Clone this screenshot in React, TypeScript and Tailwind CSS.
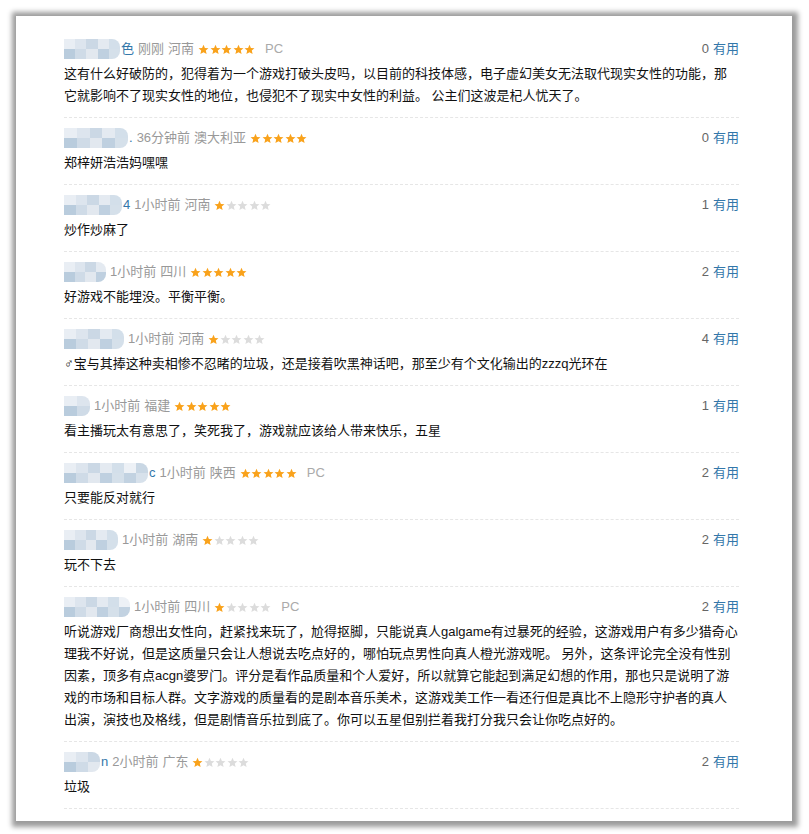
import React from 'react';

type Comment = {
  blur: number; // width of the blurred user name
  tail?: string; // visible end of the user name
  time: string;
  region: string;
  stars: number;
  pc?: boolean;
  useful: number;
  text: string;
};

const comments: Comment[] = [
  {
    blur: 56,
    tail: '色',
    time: '刚刚',
    region: '河南',
    stars: 5,
    pc: true,
    useful: 0,
    text: '这有什么好破防的，犯得着为一个游戏打破头皮吗，以目前的科技体感，电子虚幻美女无法取代现实女性的功能，那它就影响不了现实女性的地位，也侵犯不了现实中女性的利益。 公主们这波是杞人忧天了。',
  },
  { blur: 64, tail: '.', time: '36分钟前', region: '澳大利亚', stars: 5, useful: 0, text: '郑梓妍浩浩妈嘿嘿' },
  { blur: 58, tail: '4', time: '1小时前', region: '河南', stars: 1, useful: 1, text: '炒作炒麻了' },
  { blur: 42, time: '1小时前', region: '四川', stars: 5, useful: 2, text: '好游戏不能埋没。平衡平衡。' },
  {
    blur: 60,
    time: '1小时前',
    region: '河南',
    stars: 1,
    useful: 4,
    text: '♂宝与其捧这种卖相惨不忍睹的垃圾，还是接着吹黑神话吧，那至少有个文化输出的zzzq光环在',
  },
  { blur: 26, time: '1小时前', region: '福建', stars: 5, useful: 1, text: '看主播玩太有意思了，笑死我了，游戏就应该给人带来快乐，五星' },
  { blur: 84, tail: 'c', time: '1小时前', region: '陕西', stars: 5, pc: true, useful: 2, text: '只要能反对就行' },
  { blur: 54, time: '1小时前', region: '湖南', stars: 1, useful: 2, text: '玩不下去' },
  {
    blur: 66,
    time: '1小时前',
    region: '四川',
    stars: 1,
    pc: true,
    useful: 2,
    text: '听说游戏厂商想出女性向，赶紧找来玩了，尬得抠脚，只能说真人galgame有过暴死的经验，这游戏用户有多少猎奇心理我不好说，但是这质量只会让人想说去吃点好的，哪怕玩点男性向真人橙光游戏呢。 另外，这条评论完全没有性别因素，顶多有点acgn婆罗门。评分是看作品质量和个人爱好，所以就算它能起到满足幻想的作用，那也只是说明了游戏的市场和目标人群。文字游戏的质量看的是剧本音乐美术，这游戏美工作一看还行但是真比不上隐形守护者的真人出演，演技也及格线，但是剧情音乐拉到底了。你可以五星但别拦着我打分我只会让你吃点好的。',
  },
  { blur: 36, tail: 'n', time: '2小时前', region: '广东', stars: 1, useful: 2, text: '垃圾' },
];

const Star = ({ on }: { on: boolean }) => (
  <svg width="11" height="11" viewBox="0 0 24 24" className="shrink-0">
    <path
      d="M12 1.5l3.1 7.1 7.7.7-5.8 5.1 1.8 7.6L12 18l-6.8 4 1.8-7.6L1.2 9.3l7.7-.7z"
      fill={on ? '#f9a21b' : '#dcdcdc'}
    />
  </svg>
);

// mosaic used to hide the user name
const Blur = ({ width }: { width: number }) => {
  const top = ['#e9eef4', '#dde5ee', '#cbd8e5', '#e4eaf1', '#d3dfea', '#edf1f6', '#c9d7e4'];
  const bottom = ['#c2d2e1', '#d7e1eb', '#b9ccdd', '#cfdbe7', '#e2e8ef', '#bfd0e0', '#d5e0ea'];
  const n = Math.max(2, Math.round(width / 12));
  return (
    <div className="flex flex-col h-[20px] rounded-r-[8px] overflow-hidden blur-[0.6px]" style={{ width }}>
      <div className="flex flex-1">
        {Array.from({ length: n }).map((_, i) => (
          <div key={i} className="flex-1" style={{ background: top[i % top.length] }} />
        ))}
      </div>
      <div className="flex flex-1">
        {Array.from({ length: n }).map((_, i) => (
          <div key={i} className="flex-1" style={{ background: bottom[(i + 2) % bottom.length] }} />
        ))}
      </div>
    </div>
  );
};

const CommentRow = ({ c }: { c: Comment }) => (
  <div className="pt-[10px] pb-[10px] border-b border-dashed border-[#e6e6e6]">
    <div className="flex items-center justify-between h-[20px] text-[13px]">
      <div className="flex items-center text-[#999]">
        <Blur width={c.blur} />
        {c.tail && <span className="text-[#37a] ml-[1px]">{c.tail}</span>}
        <span className="ml-[4px]">{c.time}</span>
        <span className="ml-[4px]">{c.region}</span>
        <span className="flex ml-[4px] gap-[0.5px]">
          {[0, 1, 2, 3, 4].map((i) => (
            <Star key={i} on={i < c.stars} />
          ))}
        </span>
        {c.pc && <span className="ml-[10px] text-[#aaa]">PC</span>}
      </div>
      <div>
        <span className="text-[#666]">{c.useful}</span>
        <span className="text-[#37a] ml-[4px]">有用</span>
      </div>
    </div>
    <p className="mt-[4px] text-[13px] leading-[22px] text-[#111]">{c.text}</p>
  </div>
);

export default function App() {
  return (
    <div
      className="min-h-screen bg-white pt-[16px] pl-[16px] pr-[17px] pb-[16px]"
      style={{ fontFamily: '"Liberation Sans", "Noto Sans CJK SC", sans-serif' }}
    >
      <div className="bg-white shadow-[1px_1px_5px_5px_#9c9c9c] pt-[13px] pb-[12px] pl-[48px]">
        <div className="w-[675px]">
          {comments.map((c, i) => (
            <CommentRow key={i} c={c} />
          ))}
        </div>
      </div>
    </div>
  );
}
